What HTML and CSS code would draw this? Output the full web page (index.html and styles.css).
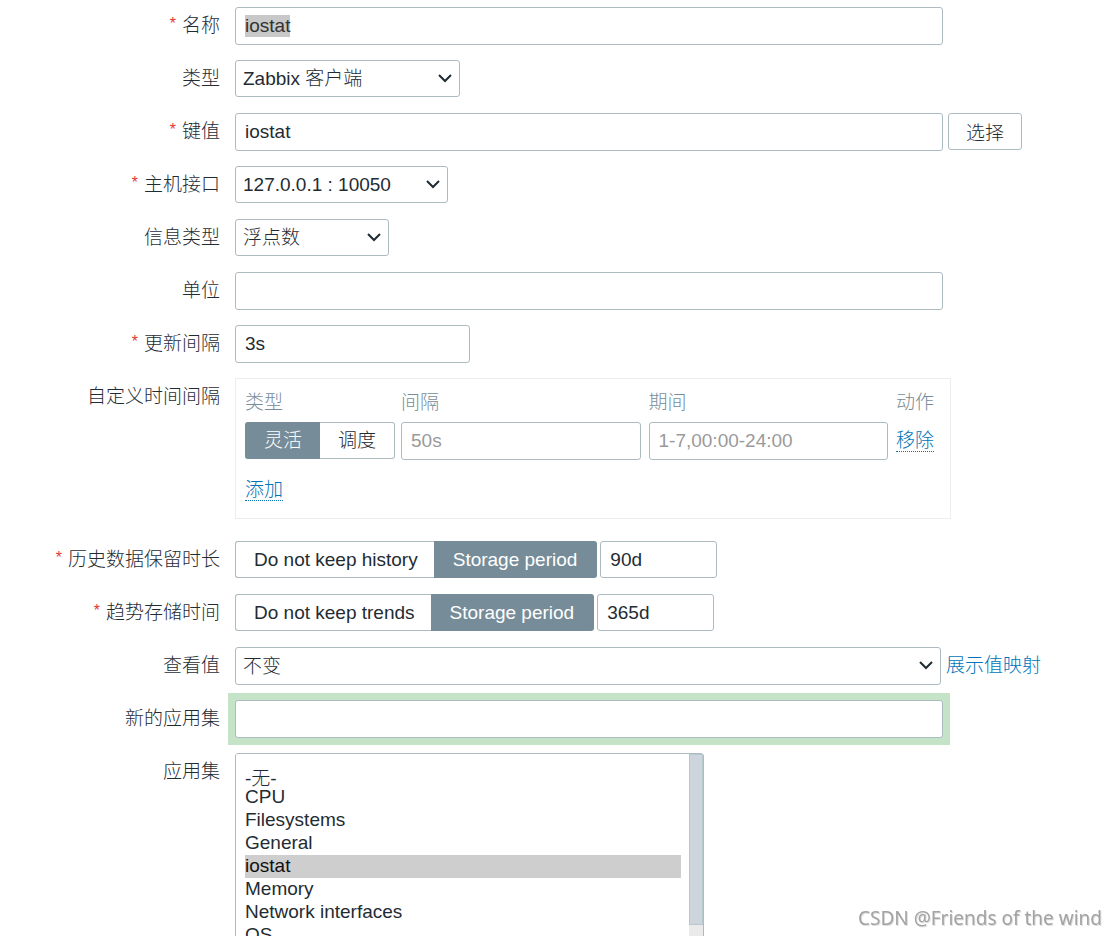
FILE: index.html
```html
<!DOCTYPE html>
<html lang="zh-CN">
<head>
<meta charset="utf-8">
<title>监控项</title>
<link rel="stylesheet" href="styles.css">
</head>
<body>
<form class="form">
  <div class="row">
    <label class="label required" for="name">名称</label>
    <div class="field"><input class="text wide" id="name" type="text" value="iostat"></div>
  </div>
  <div class="row">
    <label class="label" for="type">类型</label>
    <div class="field">
      <span class="select select-type"><select id="type"><option>Zabbix 客户端</option></select><svg class="chevron" viewBox="0 0 14 9" aria-hidden="true"><path d="M1 1l6 6 6-6"/></svg></span>
    </div>
  </div>
  <div class="row">
    <label class="label required" for="key">键值</label>
    <div class="field"><input class="text wide" id="key" type="text" value="iostat"><button class="button" type="button">选择</button></div>
  </div>
  <div class="row">
    <label class="label required" for="interface">主机接口</label>
    <div class="field">
      <span class="select select-interface"><select id="interface"><option>127.0.0.1 : 10050</option></select><svg class="chevron" viewBox="0 0 14 9" aria-hidden="true"><path d="M1 1l6 6 6-6"/></svg></span>
    </div>
  </div>
  <div class="row">
    <label class="label" for="value-type">信息类型</label>
    <div class="field">
      <span class="select select-value"><select id="value-type"><option>浮点数</option></select><svg class="chevron" viewBox="0 0 14 9" aria-hidden="true"><path d="M1 1l6 6 6-6"/></svg></span>
    </div>
  </div>
  <div class="row">
    <label class="label" for="units">单位</label>
    <div class="field"><input class="text wide" id="units" type="text"></div>
  </div>
  <div class="row">
    <label class="label required" for="delay">更新间隔</label>
    <div class="field"><input class="text medium" id="delay" type="text" value="3s"></div>
  </div>
  <div class="row row-intervals">
    <span class="label" id="intervals-label">自定义时间间隔</span>
    <div class="field">
      <div class="panel">
        <table class="intervals" aria-labelledby="intervals-label">
          <thead>
            <tr><th class="col-type">类型</th><th>间隔</th><th>期间</th><th class="col-action">动作</th></tr>
          </thead>
          <tbody>
            <tr>
              <td>
                <div class="segmented">
                  <input type="radio" name="interval-type" id="flexible" checked><label for="flexible">灵活</label>
                  <input type="radio" name="interval-type" id="scheduling"><label for="scheduling">调度</label>
                </div>
              </td>
              <td><input class="text" type="text" placeholder="50s" aria-label="间隔"></td>
              <td><input class="text" type="text" placeholder="1-7,00:00-24:00" aria-label="期间"></td>
              <td class="cell-action"><a class="link-action" href="#remove">移除</a></td>
            </tr>
          </tbody>
        </table>
        <a class="link-action" href="#add">添加</a>
      </div>
    </div>
  </div>
  <div class="row">
    <label class="label required" for="history">历史数据保留时长</label>
    <div class="field field-tight">
      <div class="segmented segmented-storage">
        <input type="radio" name="history-mode" id="history-off"><label for="history-off">Do not keep history</label>
        <input type="radio" name="history-mode" id="history-on" checked><label for="history-on">Storage period</label>
      </div>
      <input class="text short" id="history" type="text" value="90d">
    </div>
  </div>
  <div class="row">
    <label class="label required" for="trends">趋势存储时间</label>
    <div class="field field-tight">
      <div class="segmented segmented-storage">
        <input type="radio" name="trends-mode" id="trends-off"><label for="trends-off">Do not keep trends</label>
        <input type="radio" name="trends-mode" id="trends-on" checked><label for="trends-on">Storage period</label>
      </div>
      <input class="text short" id="trends" type="text" value="365d">
    </div>
  </div>
  <div class="row">
    <label class="label" for="valuemap">查看值</label>
    <div class="field">
      <span class="select select-map"><select id="valuemap"><option>不变</option></select><svg class="chevron" viewBox="0 0 14 9" aria-hidden="true"><path d="M1 1l6 6 6-6"/></svg></span>
      <a class="link" href="#valuemaps">展示值映射</a>
    </div>
  </div>
  <div class="row">
    <label class="label" for="new-app">新的应用集</label>
    <div class="field"><div class="highlight"><input class="text" id="new-app" type="text"></div></div>
  </div>
  <div class="row">
    <label class="label" for="apps">应用集</label>
    <div class="field">
      <div class="listbox">
        <select id="apps" multiple size="10">
          <option>-无-</option>
          <option>CPU</option>
          <option>Filesystems</option>
          <option>General</option>
          <option selected>iostat</option>
          <option>Memory</option>
          <option>Network interfaces</option>
          <option>OS</option>
          <option>Performance</option>
          <option>Processes</option>
          <option>Security</option>
          <option>Status</option>
          <option>Storage</option>
          <option>Zabbix agent</option>
          <option>Zabbix server</option>
        </select>
        <div class="scrollbar" aria-hidden="true"><div class="scrollbar-thumb"></div></div>
      </div>
    </div>
  </div>
</form>
<div class="watermark">CSDN @Friends of the wind</div>
<script src="script.js"></script>
</body>
</html>
```
FILE: styles.css
```css
* { box-sizing: border-box; }

html { overflow: hidden; }

body {
  margin: 0;
  height: 100vh;
  overflow: hidden;
  background: #fff;
  color: #1f2c33;
}

body, input, select, option, button {
  font-family: "Liberation Sans", "Noto Sans CJK SC", sans-serif;
  font-size: 19px;
  font-weight: 300;
}

.form {
  display: flex;
  flex-direction: column;
  gap: 15px;
  height: 100%;
  padding-top: 7px;
  overflow: hidden;
}

.row {
  display: grid;
  flex: none;
  grid-template-columns: 220px minmax(0, 1fr);
  column-gap: 15px;
  min-height: 38px;
}

.row-intervals { margin-bottom: 7px; }

.label {
  text-align: right;
  line-height: 38px;
}

.required::before {
  content: "*";
  margin-right: 6px;
  color: #e33734;
  font-size: 16px;
  line-height: 1;
  vertical-align: 3px;
}

.field {
  display: flex;
  align-items: flex-start;
  gap: 5px;
}

.field-tight { gap: 3px; }

.text {
  width: 100%;
  height: 38px;
  padding: 0 9px;
  border: 1px solid #acbbc2;
  border-radius: 3px;
  background: #fff;
  color: #1f2c33;
  outline: none;
}

.text::placeholder { color: #9a9a9a; opacity: 1; }
.text::selection { background: #c8c8c8; color: #333; }

.wide { max-width: 708px; }
.medium { max-width: 235px; }
.short { max-width: 117px; height: 37px; }

.highlight {
  width: 100%;
  max-width: 708px;
  height: 38px;
  background: #c5e3c7;
  box-shadow: 0 0 0 7px #c5e3c7;
}

.button {
  flex: none;
  height: 37px;
  padding: 0 17px;
  border: 1px solid #acbbc2;
  border-radius: 3px;
  background: #fff;
  color: #1f2c33;
}

.select {
  position: relative;
  height: 37px;
}

.select select {
  width: 100%;
  height: 100%;
  padding: 0 30px 0 7px;
  border: 1px solid #acbbc2;
  border-radius: 3px;
  background: #fff;
  color: #1f2c33;
  appearance: none;
}

.select-type { width: 225px; }
.select-interface { width: 213px; }
.select-value { width: 154px; }
.select-map { width: 100%; max-width: 706px; height: 38px; }

.chevron {
  position: absolute;
  top: 14px;
  right: 8px;
  width: 14px;
  height: 9px;
  fill: none;
  stroke: #1f2c33;
  stroke-width: 2;
  pointer-events: none;
}

.segmented {
  position: relative;
  display: flex;
  flex: none;
  height: 37px;
}

.segmented input {
  position: absolute;
  opacity: 0;
  pointer-events: none;
}

.segmented label {
  flex: auto;
  padding: 0 18px;
  border: 1px solid #acbbc2;
  line-height: 35px;
  text-align: center;
  white-space: nowrap;
}

.segmented label:first-of-type {
  border-right: 0;
  border-radius: 3px 0 0 3px;
}

.segmented label:last-of-type {
  border-left: 0;
  border-radius: 0 3px 3px 0;
}

.segmented-storage label:first-of-type { padding-right: 16px; }
.segmented-storage label:last-of-type { padding: 0 19px; }

.segmented input:checked + label {
  border-color: #768d99;
  background: #768d99;
  color: #fff;
}

.panel {
  width: 100%;
  max-width: 716px;
  height: 141px;
  padding: 3px 7px 0 9px;
  border: 1px solid #ebeef0;
}

.intervals {
  width: 100%;
  margin-bottom: 14px;
  border-collapse: collapse;
  table-layout: fixed;
}

.intervals th {
  height: 40px;
  padding: 0 0 4px;
  color: #768d99;
  font-weight: 300;
  text-align: left;
}

.intervals td {
  padding: 0 8px 0 0;
  vertical-align: top;
}

.intervals .cell-action {
  padding: 0;
  line-height: 38px;
}

.col-type { width: 156px; }
.col-action { width: 47px; }

.link, .link-action {
  color: #0275b8;
  text-decoration: none;
}

.link { flex: none; line-height: 38px; }

.link-action { border-bottom: 1px dotted #0275b8; }

.listbox {
  position: relative;
  width: 469px;
  height: 252px;
}

.listbox select {
  width: 100%;
  height: 100%;
  padding: 9px 22px 9px 9px;
  border: 1px solid #acbbc2;
  border-radius: 3px;
  background: #fff;
  color: #1f2c33;
  outline: none;
  scrollbar-width: none;
}

.listbox option {
  height: 23px;
  min-height: 23px;
  padding: 0;
  line-height: 23px;
}

.listbox option:checked {
  background: #cecece linear-gradient(#cecece, #cecece);
  color: #111;
}

.scrollbar {
  position: absolute;
  top: 1px;
  right: 1px;
  bottom: 1px;
  width: 14px;
  background: #eaeaea;
  pointer-events: none;
}

.scrollbar-thumb {
  height: 171px;
  border: 1px solid #b9c7ce;
  background: #ccd5db;
}

.watermark {
  position: fixed;
  right: 14px;
  bottom: 4px;
  color: #a3a3a3;
  font-family: "Noto Sans", sans-serif;
  font-size: 19px;
  font-weight: 400;
  line-height: 28px;
  text-shadow: 1px 1px 0 #ddd;
}
```
FILE: script.js
```js
const nameField = document.getElementById("name");
nameField.focus();
nameField.select();
```
